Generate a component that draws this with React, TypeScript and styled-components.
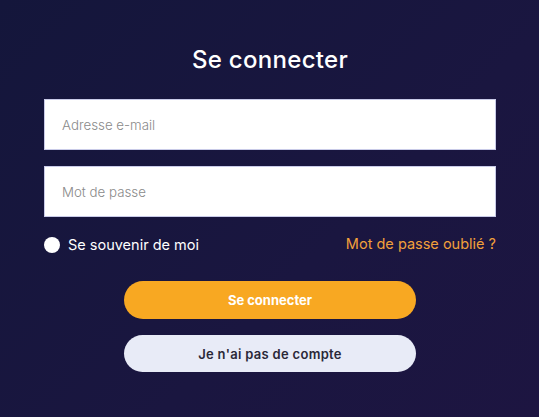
import React from "react";
import styled, { createGlobalStyle } from "styled-components";

const Global = createGlobalStyle`
  html, body { margin: 0; padding: 0; }
  body {
    width: 539px;
    height: 417px;
    overflow: hidden;
    font-family: Inter, "Open Sans", sans-serif;
  }
  * { box-sizing: border-box; }
`;

const Page = styled.div`
  width: 539px;
  height: 417px;
  background: linear-gradient(135deg, #14163b 0%, #1a1640 60%, #1d1541 100%);
  padding: 44px 43px 0 44px;
  display: flex;
  flex-direction: column;
`;

const Title = styled.h1`
  margin: 0;
  text-align: center;
  color: #ffffff;
  font-size: 24px;
  font-weight: 500;
  line-height: 32px;
  letter-spacing: 0.3px;
`;

const Fields = styled.div`
  margin-top: 23px;
  display: flex;
  flex-direction: column;
  gap: 16px;
`;

const Input = styled.input`
  width: 452px;
  height: 51px;
  border: 1px solid #c9cbe8;
  background: #ffffff;
  padding: 0 17px;
  font-family: inherit;
  font-size: 13.3px;
  font-weight: 300;
  color: #333;
  outline: none;
  &::placeholder { color: #8a8a8a; }
`;

const Options = styled.div`
  margin-top: 17px;
  width: 452px;
  display: flex;
  justify-content: space-between;
  align-items: center;
`;

const Remember = styled.label`
  display: flex;
  align-items: center;
  gap: 8px;
  color: #ffffff;
  font-size: 14.5px;
  font-weight: 400;
  margin-top: 2px;
`;

const Radio = styled.span`
  width: 16px;
  height: 16px;
  border-radius: 50%;
  background: #ffffff;
  display: inline-block;
`;

const Forgot = styled.a`
  color: #f2a03b;
  font-size: 14.5px;
  font-weight: 400;
  text-decoration: none;
`;

const Buttons = styled.div`
  margin-top: 28px;
  display: flex;
  flex-direction: column;
  align-items: center;
  gap: 16px;
  width: 452px;
`;

const Button = styled.button<{ $variant: "primary" | "secondary" }>`
  width: 292px;
  height: ${(p) => (p.$variant === "primary" ? "38px" : "37px")};
  border: none;
  border-radius: 19px;
  font-family: inherit;
  font-size: 13px;
  font-weight: ${(p) => (p.$variant === "primary" ? 700 : 600)};
  letter-spacing: ${(p) => (p.$variant === "primary" ? "0" : "0.3px")};
  color: ${(p) => (p.$variant === "primary" ? "#ffffff" : "#2a2838")};
  background: ${(p) => (p.$variant === "primary" ? "#f8a822" : "#e8ebf7")};
  cursor: pointer;
`;

export default function App() {
  return (
    <>
      <Global />
      <Page>
        <Title>Se connecter</Title>
        <Fields>
          <Input type="email" placeholder="Adresse e-mail" />
          <Input type="password" placeholder="Mot de passe" />
        </Fields>
        <Options>
          <Remember>
            <Radio />
            Se souvenir de moi
          </Remember>
          <Forgot href="#">Mot de passe oublié ?</Forgot>
        </Options>
        <Buttons>
          <Button $variant="primary">Se connecter</Button>
          <Button $variant="secondary">Je n'ai pas de compte</Button>
        </Buttons>
      </Page>
    </>
  );
}
